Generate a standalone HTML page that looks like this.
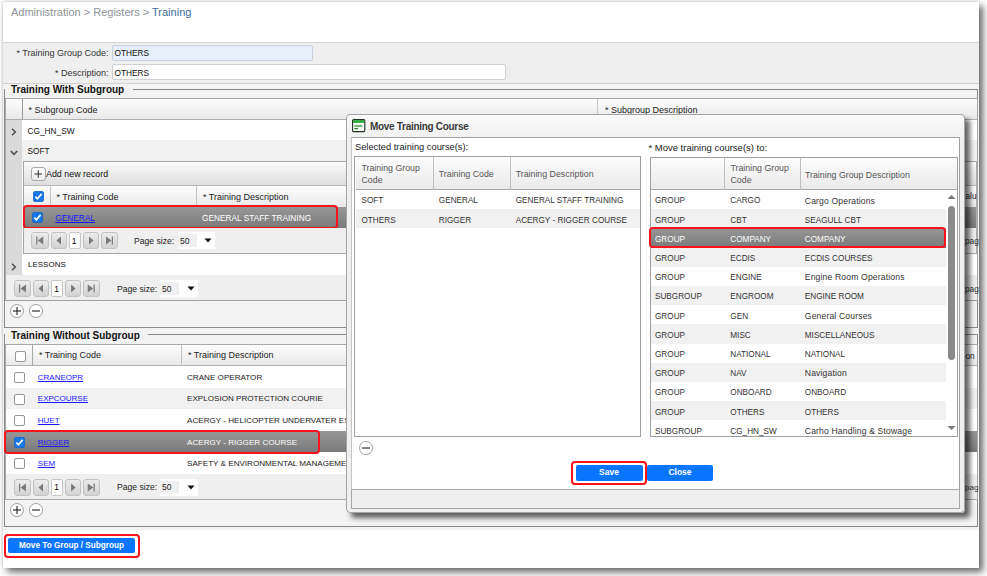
<!DOCTYPE html><html><head><meta charset="utf-8"><style>html,body{margin:0;padding:0;width:987px;height:576px;overflow:hidden;background:#fff;font-family:"Liberation Sans", sans-serif;}</style></head><body>
<div style="position:absolute;left:0px;top:0px;width:987px;height:576px;box-sizing:border-box;background:#fff;"></div>
<div style="position:absolute;left:3px;top:2px;width:976px;height:566px;box-sizing:border-box;background:#fff;box-shadow:4px 4px 7px rgba(0,0,0,0.6), -1px -1px 2px rgba(0,0,0,0.12);"></div>
<div style="position:absolute;top:6.69px;font-size:11px;line-height:11px;color:#8c939b;font-weight:400;white-space:nowrap;left:11px;">Administration &gt; Registers &gt; <span style="color:#3d6b9c">Training</span></div>
<div style="position:absolute;left:3px;top:42px;width:976px;height:1px;box-sizing:border-box;background:#d6d6d6;"></div>
<div style="position:absolute;left:3px;top:43px;width:976px;height:40px;box-sizing:border-box;background:#efefef;"></div>
<div style="position:absolute;left:3px;top:83px;width:976px;height:1px;box-sizing:border-box;background:#d0d0d0;"></div>
<div style="position:absolute;top:49.18px;font-size:9px;line-height:9px;color:#333;font-weight:400;white-space:nowrap;right:878.5px;">* Training Group Code:</div>
<div style="position:absolute;top:68.68px;font-size:9px;line-height:9px;color:#333;font-weight:400;white-space:nowrap;right:878.5px;">* Description:</div>
<div style="position:absolute;left:112px;top:45px;width:201px;height:16px;box-sizing:border-box;background:#e6eefa;border:1px solid #c9d1dc;border-radius:2px;"></div>
<div style="position:absolute;left:112px;top:64px;width:394px;height:16px;box-sizing:border-box;background:#fff;border:1px solid #d0d0d0;border-radius:2px;"></div>
<div style="position:absolute;top:49.47px;font-size:8.3px;line-height:8.3px;color:#111;font-weight:400;white-space:nowrap;left:114.5px;">OTHERS</div>
<div style="position:absolute;top:68.97px;font-size:8.3px;line-height:8.3px;color:#111;font-weight:400;white-space:nowrap;left:114.5px;">OTHERS</div>
<div style="position:absolute;left:3px;top:84px;width:976px;height:446px;box-sizing:border-box;background:#f3f3f3;"></div>
<div style="position:absolute;left:4px;top:89px;width:974px;height:239px;box-sizing:border-box;border:1px solid #8a8a8a;border-top:none;"></div>
<div style="position:absolute;left:133px;top:89px;width:845px;height:1px;box-sizing:border-box;background:#8a8a8a;"></div>
<div style="position:absolute;top:85.33px;font-size:10px;line-height:10px;color:#111;font-weight:700;white-space:nowrap;left:11px;">Training With Subgroup</div>
<div style="position:absolute;left:4px;top:334px;width:974px;height:193px;box-sizing:border-box;border:1px solid #8a8a8a;border-top:none;"></div>
<div style="position:absolute;left:148px;top:334px;width:830px;height:1px;box-sizing:border-box;background:#8a8a8a;"></div>
<div style="position:absolute;top:330.84px;font-size:10px;line-height:10px;color:#111;font-weight:700;white-space:nowrap;left:11px;">Training Without Subgroup</div>
<div style="position:absolute;left:5px;top:98px;width:973px;height:203px;box-sizing:border-box;border:1px solid #a8a8a8;background:#fff;"></div>
<div style="position:absolute;left:6px;top:99px;width:971px;height:20px;box-sizing:border-box;background:linear-gradient(#fdfdfd,#e9e9e9);"></div>
<div style="position:absolute;left:6px;top:118.5px;width:971px;height:1.0px;box-sizing:border-box;background:#b0b0b0;"></div>
<div style="position:absolute;left:22px;top:99px;width:1px;height:20px;box-sizing:border-box;background:#9c9c9c;"></div>
<div style="position:absolute;left:597px;top:99px;width:1px;height:20px;box-sizing:border-box;background:#c8c8c8;"></div>
<div style="position:absolute;top:105.88px;font-size:9px;line-height:9px;color:#222;font-weight:400;white-space:nowrap;left:28.5px;">* Subgroup Code</div>
<div style="position:absolute;top:105.88px;font-size:9px;line-height:9px;color:#222;font-weight:400;white-space:nowrap;left:605px;">* Subgroup Description</div>
<div style="position:absolute;left:6px;top:119.5px;width:16px;height:155.5px;box-sizing:border-box;background:#dadada;"></div>
<div style="position:absolute;left:22px;top:119.5px;width:955px;height:20.5px;box-sizing:border-box;background:#fff;"></div>
<div style="position:absolute;left:22px;top:140px;width:955px;height:21px;box-sizing:border-box;background:#f1f1f1;"></div>
<div style="position:absolute;top:127.47px;font-size:8.3px;line-height:8.3px;color:#111;font-weight:400;white-space:nowrap;left:27.5px;">CG_HN_SW</div>
<div style="position:absolute;top:147.17px;font-size:8.3px;line-height:8.3px;color:#111;font-weight:400;white-space:nowrap;left:27.5px;">SOFT</div>
<svg style="position:absolute;left:9px;top:126.5px" width="10" height="10"><path d="M3 1.8 L6.3 5 L3 8.2" fill="none" stroke="#505050" stroke-width="1.6"/></svg>
<svg style="position:absolute;left:9px;top:147.5px" width="10" height="10"><path d="M1.8 3 L5 6.3 L8.2 3" fill="none" stroke="#505050" stroke-width="1.6"/></svg>
<div style="position:absolute;left:22px;top:161px;width:955px;height:93px;box-sizing:border-box;background:#f4f4f4;"></div>
<div style="position:absolute;left:23px;top:161px;width:954px;height:93px;box-sizing:border-box;border:1px solid #a8a8a8;background:#fff;"></div>
<div style="position:absolute;left:24px;top:162px;width:952px;height:23px;box-sizing:border-box;background:linear-gradient(#fbfbfb,#dedede);"></div>
<div style="position:absolute;left:24px;top:184.5px;width:952px;height:1.0px;box-sizing:border-box;background:#b8b8b8;"></div>
<div style="position:absolute;left:31px;top:166.5px;width:14.5px;height:14.0px;box-sizing:border-box;background:linear-gradient(#fff,#ececec);border:1px solid #aaa;border-radius:3px;"></div>
<svg style="position:absolute;left:31px;top:166.5px" width="15" height="14"><rect x="3.5" y="6.45" width="7.5" height="1.05" fill="#333"/><rect x="6.75" y="3.2" width="1.05" height="7.5" fill="#333"/></svg>
<div style="position:absolute;top:170.47px;font-size:8.9px;line-height:8.9px;color:#111;font-weight:400;white-space:nowrap;left:46px;">Add new record</div>
<div style="position:absolute;left:24px;top:185.5px;width:952px;height:21.5px;box-sizing:border-box;background:linear-gradient(#fdfdfd,#e9e9e9);"></div>
<div style="position:absolute;left:50px;top:185.5px;width:1px;height:21.5px;box-sizing:border-box;background:#c4c4c4;"></div>
<div style="position:absolute;left:196px;top:185.5px;width:1px;height:21.5px;box-sizing:border-box;background:#c4c4c4;"></div>
<svg style="position:absolute;left:33px;top:191px" width="11" height="11"><rect x="0.5" y="0.5" width="10" height="10" rx="1.5" fill="#1877e6" stroke="#1467c8" stroke-width="0.8"/><path d="M2.4 5.6 L4.4 7.7 L8.6 2.9" fill="none" stroke="#fff" stroke-width="1.6"/></svg>
<div style="position:absolute;top:193.18px;font-size:9px;line-height:9px;color:#222;font-weight:400;white-space:nowrap;left:56.5px;">* Training Code</div>
<div style="position:absolute;top:193.18px;font-size:9px;line-height:9px;color:#222;font-weight:400;white-space:nowrap;left:203px;">* Training Description</div>
<div style="position:absolute;left:24px;top:207px;width:952px;height:21px;box-sizing:border-box;background:linear-gradient(#979797,#7a7a7a);"></div>
<svg style="position:absolute;left:32px;top:212px" width="11" height="11"><rect x="0.5" y="0.5" width="10" height="10" rx="1.5" fill="#1877e6" stroke="#1467c8" stroke-width="0.8"/><path d="M2.4 5.6 L4.4 7.7 L8.6 2.9" fill="none" stroke="#fff" stroke-width="1.6"/></svg>
<div style="position:absolute;top:214.27px;font-size:8.3px;line-height:8.3px;color:#1a1aff;font-weight:400;white-space:nowrap;left:55.3px;"><u>GENERAL</u></div>
<div style="position:absolute;top:214.27px;font-size:8.3px;line-height:8.3px;color:#fff;font-weight:400;white-space:nowrap;left:202px;">GENERAL STAFF TRAINING</div>
<div style="position:absolute;left:22.5px;top:204.5px;width:315.2px;height:24.19999999999999px;box-sizing:border-box;border:2px solid #f5141b;border-radius:4px;"></div>
<div style="position:absolute;left:24px;top:228px;width:952px;height:25px;box-sizing:border-box;background:#efefef;"></div>
<div style="position:absolute;left:31px;top:232px;width:17.5px;height:17px;box-sizing:border-box;background:linear-gradient(#ececec,#d2d2d2);border:1px solid #c2c2c2;border-radius:3px;"></div>
<div style="position:absolute;left:50.5px;top:232px;width:16.0px;height:17px;box-sizing:border-box;background:linear-gradient(#ececec,#d2d2d2);border:1px solid #c2c2c2;border-radius:3px;"></div>
<div style="position:absolute;left:68.5px;top:232px;width:12.0px;height:17px;box-sizing:border-box;background:#fff;border:1px solid #c8c8c8;border-radius:2px;"></div>
<div style="position:absolute;left:82.5px;top:232px;width:16.0px;height:17px;box-sizing:border-box;background:linear-gradient(#ececec,#d2d2d2);border:1px solid #c2c2c2;border-radius:3px;"></div>
<div style="position:absolute;left:100.5px;top:232px;width:17.0px;height:17px;box-sizing:border-box;background:linear-gradient(#ececec,#d2d2d2);border:1px solid #c2c2c2;border-radius:3px;"></div>
<svg style="position:absolute;left:31px;top:232px" width="17.5" height="17"><rect x="5.25" y="4.5" width="1.2" height="8" fill="#7a7a7a"/><path d="M12.25 4.5 L6.75 8.5 L12.25 12.5Z" fill="#7a7a7a"/></svg>
<svg style="position:absolute;left:50.5px;top:232px" width="16.0" height="17"><path d="M10.0 4.5 L5.5 8.5 L10.0 12.5Z" fill="#7a7a7a"/></svg>
<svg style="position:absolute;left:82.5px;top:232px" width="16.0" height="17"><path d="M6.0 4.5 L10.5 8.5 L6.0 12.5Z" fill="#7a7a7a"/></svg>
<svg style="position:absolute;left:100.5px;top:232px" width="17.0" height="17"><path d="M5.0 4.5 L10.5 8.5 L5.0 12.5Z" fill="#7a7a7a"/><rect x="10.8" y="4.5" width="1.2" height="8" fill="#7a7a7a"/></svg>
<div style="position:absolute;top:237.20px;font-size:8.5px;line-height:8.5px;color:#000;font-weight:400;white-space:nowrap;left:71.8px;">1</div>
<div style="position:absolute;top:237.12px;font-size:8.6px;line-height:8.6px;color:#222;font-weight:400;white-space:nowrap;left:134px;">Page size:</div>
<div style="position:absolute;left:178px;top:232px;width:37px;height:17px;box-sizing:border-box;background:#fff;"></div>
<div style="position:absolute;left:178px;top:234px;width:19px;height:13px;box-sizing:border-box;background:#f0f0f0;"></div>
<div style="position:absolute;top:237.20px;font-size:8.5px;line-height:8.5px;color:#222;font-weight:400;white-space:nowrap;left:180px;">50</div>
<svg style="position:absolute;left:204px;top:232px" width="8" height="17"><path d="M0.5 6.5 L7.5 6.5 L4 10.5Z" fill="#111"/></svg>
<div style="position:absolute;left:22px;top:254px;width:955px;height:21px;box-sizing:border-box;background:#fff;"></div>
<div style="position:absolute;top:261.23px;font-size:8px;line-height:8px;color:#111;font-weight:400;white-space:nowrap;left:28px;">LESSONS</div>
<svg style="position:absolute;left:9px;top:261.5px" width="10" height="10"><path d="M3 1.8 L6.3 5 L3 8.2" fill="none" stroke="#505050" stroke-width="1.6"/></svg>
<div style="position:absolute;left:6px;top:275px;width:971px;height:25px;box-sizing:border-box;background:#efefef;"></div>
<div style="position:absolute;left:13.5px;top:280px;width:17.0px;height:17px;box-sizing:border-box;background:linear-gradient(#ececec,#d2d2d2);border:1px solid #c2c2c2;border-radius:3px;"></div>
<div style="position:absolute;left:32.5px;top:280px;width:16.0px;height:17px;box-sizing:border-box;background:linear-gradient(#ececec,#d2d2d2);border:1px solid #c2c2c2;border-radius:3px;"></div>
<div style="position:absolute;left:51px;top:280px;width:11.5px;height:17px;box-sizing:border-box;background:#fff;border:1px solid #c8c8c8;border-radius:2px;"></div>
<div style="position:absolute;left:64.5px;top:280px;width:16.299999999999997px;height:17px;box-sizing:border-box;background:linear-gradient(#ececec,#d2d2d2);border:1px solid #c2c2c2;border-radius:3px;"></div>
<div style="position:absolute;left:83px;top:280px;width:16.5px;height:17px;box-sizing:border-box;background:linear-gradient(#ececec,#d2d2d2);border:1px solid #c2c2c2;border-radius:3px;"></div>
<svg style="position:absolute;left:13.5px;top:280px" width="17.0" height="17"><rect x="5.0" y="4.5" width="1.2" height="8" fill="#7a7a7a"/><path d="M12.0 4.5 L6.5 8.5 L12.0 12.5Z" fill="#7a7a7a"/></svg>
<svg style="position:absolute;left:32.5px;top:280px" width="16.0" height="17"><path d="M10.0 4.5 L5.5 8.5 L10.0 12.5Z" fill="#7a7a7a"/></svg>
<svg style="position:absolute;left:64.5px;top:280px" width="16.299999999999997" height="17"><path d="M6.149999999999999 4.5 L10.649999999999999 8.5 L6.149999999999999 12.5Z" fill="#7a7a7a"/></svg>
<svg style="position:absolute;left:83px;top:280px" width="16.5" height="17"><path d="M4.75 4.5 L10.25 8.5 L4.75 12.5Z" fill="#7a7a7a"/><rect x="10.55" y="4.5" width="1.2" height="8" fill="#7a7a7a"/></svg>
<div style="position:absolute;top:284.70px;font-size:8.5px;line-height:8.5px;color:#000;font-weight:400;white-space:nowrap;left:54.3px;">1</div>
<div style="position:absolute;top:284.62px;font-size:8.6px;line-height:8.6px;color:#222;font-weight:400;white-space:nowrap;left:117px;">Page size:</div>
<div style="position:absolute;left:160px;top:280px;width:38px;height:17px;box-sizing:border-box;background:#fff;"></div>
<div style="position:absolute;left:160px;top:282px;width:19px;height:13px;box-sizing:border-box;background:#f0f0f0;"></div>
<div style="position:absolute;top:284.70px;font-size:8.5px;line-height:8.5px;color:#222;font-weight:400;white-space:nowrap;left:162px;">50</div>
<svg style="position:absolute;left:187px;top:280px" width="8" height="17"><path d="M0.5 6.5 L7.5 6.5 L4 10.5Z" fill="#111"/></svg>
<div style="position:absolute;left:5px;top:300px;width:973px;height:1px;box-sizing:border-box;background:#a0a0a0;"></div>
<svg style="position:absolute;left:8px;top:302px" width="18" height="18"><circle cx="9" cy="9.6" r="6.5" fill="#ccc" opacity="0.5"/><circle cx="9" cy="9" r="6.5" fill="#fff" stroke="#9a9a9a" stroke-width="0.9"/><rect x="5" y="8.45" width="8" height="1.1" fill="#222"/><rect x="8.45" y="5" width="1.1" height="8" fill="#222"/></svg>
<svg style="position:absolute;left:27px;top:302px" width="18" height="18"><circle cx="9" cy="9.6" r="6.5" fill="#ccc" opacity="0.5"/><circle cx="9" cy="9" r="6.5" fill="#fff" stroke="#9a9a9a" stroke-width="0.9"/><rect x="5" y="8.45" width="8" height="1.1" fill="#222"/></svg>
<div style="position:absolute;left:5px;top:344px;width:973px;height:156px;box-sizing:border-box;border:1px solid #a8a8a8;background:#fff;"></div>
<div style="position:absolute;left:6px;top:345px;width:971px;height:20.5px;box-sizing:border-box;background:linear-gradient(#fdfdfd,#e9e9e9);"></div>
<div style="position:absolute;left:6px;top:365px;width:971px;height:1px;box-sizing:border-box;background:#b0b0b0;"></div>
<div style="position:absolute;left:32px;top:345px;width:1px;height:20.5px;box-sizing:border-box;background:#a8a8a8;"></div>
<div style="position:absolute;left:181px;top:345px;width:1px;height:20.5px;box-sizing:border-box;background:#c4c4c4;"></div>
<svg style="position:absolute;left:14.8px;top:351px" width="11" height="11"><rect x="0.5" y="0.5" width="10" height="10" rx="1.5" fill="#fff" stroke="#8a8a8a" stroke-width="0.9"/></svg>
<div style="position:absolute;top:351.18px;font-size:9px;line-height:9px;color:#222;font-weight:400;white-space:nowrap;left:39px;">* Training Code</div>
<div style="position:absolute;top:351.18px;font-size:9px;line-height:9px;color:#222;font-weight:400;white-space:nowrap;left:188px;">* Training Description</div>
<div style="position:absolute;left:6px;top:366px;width:971px;height:21.600000000000023px;box-sizing:border-box;background:#fff;"></div>
<svg style="position:absolute;left:13.8px;top:372px" width="11" height="11"><rect x="0.5" y="0.5" width="10" height="10" rx="1.5" fill="#fff" stroke="#8a8a8a" stroke-width="0.9"/></svg>
<div style="position:absolute;top:373.83px;font-size:8px;line-height:8px;color:#1a1aff;font-weight:400;white-space:nowrap;left:37.8px;"><u>CRANEOPR</u></div>
<div style="position:absolute;top:373.74px;font-size:8.1px;line-height:8.1px;color:#222;font-weight:400;white-space:nowrap;left:187px;">CRANE OPERATOR</div>
<div style="position:absolute;left:6px;top:387.6px;width:971px;height:21.600000000000023px;box-sizing:border-box;background:#f1f1f1;"></div>
<svg style="position:absolute;left:13.8px;top:393.6px" width="11" height="11"><rect x="0.5" y="0.5" width="10" height="10" rx="1.5" fill="#fff" stroke="#8a8a8a" stroke-width="0.9"/></svg>
<div style="position:absolute;top:395.43px;font-size:8px;line-height:8px;color:#1a1aff;font-weight:400;white-space:nowrap;left:37.8px;"><u>EXPCOURSE</u></div>
<div style="position:absolute;top:395.34px;font-size:8.1px;line-height:8.1px;color:#222;font-weight:400;white-space:nowrap;left:187px;">EXPLOSION PROTECTION COURIE</div>
<div style="position:absolute;left:6px;top:409.20000000000005px;width:971px;height:21.600000000000023px;box-sizing:border-box;background:#fff;"></div>
<svg style="position:absolute;left:13.8px;top:415.20000000000005px" width="11" height="11"><rect x="0.5" y="0.5" width="10" height="10" rx="1.5" fill="#fff" stroke="#8a8a8a" stroke-width="0.9"/></svg>
<div style="position:absolute;top:417.03px;font-size:8px;line-height:8px;color:#1a1aff;font-weight:400;white-space:nowrap;left:37.8px;"><u>HUET</u></div>
<div style="position:absolute;top:416.94px;font-size:8.1px;line-height:8.1px;color:#222;font-weight:400;white-space:nowrap;left:187px;">ACERGY - HELICOPTER UNDERVATER ES</div>
<div style="position:absolute;left:6px;top:430.80000000000007px;width:971px;height:21.600000000000023px;box-sizing:border-box;background:linear-gradient(#979797,#7a7a7a);"></div>
<svg style="position:absolute;left:13.8px;top:436.80000000000007px" width="11" height="11"><rect x="0.5" y="0.5" width="10" height="10" rx="1.5" fill="#1877e6" stroke="#1467c8" stroke-width="0.8"/><path d="M2.4 5.6 L4.4 7.7 L8.6 2.9" fill="none" stroke="#fff" stroke-width="1.6"/></svg>
<div style="position:absolute;top:438.63px;font-size:8px;line-height:8px;color:#1a1aff;font-weight:400;white-space:nowrap;left:37.8px;"><u>RIGGER</u></div>
<div style="position:absolute;top:438.54px;font-size:8.1px;line-height:8.1px;color:#fff;font-weight:400;white-space:nowrap;left:187px;">ACERGY - RIGGER COURSE</div>
<div style="position:absolute;left:6px;top:452.4000000000001px;width:971px;height:21.600000000000023px;box-sizing:border-box;background:#fff;"></div>
<svg style="position:absolute;left:13.8px;top:458.4000000000001px" width="11" height="11"><rect x="0.5" y="0.5" width="10" height="10" rx="1.5" fill="#fff" stroke="#8a8a8a" stroke-width="0.9"/></svg>
<div style="position:absolute;top:460.23px;font-size:8px;line-height:8px;color:#1a1aff;font-weight:400;white-space:nowrap;left:37.8px;"><u>SEM</u></div>
<div style="position:absolute;top:460.14px;font-size:8.1px;line-height:8.1px;color:#222;font-weight:400;white-space:nowrap;left:187px;">SAFETY &amp; ENVIRONMENTAL MANAGEMENT</div>
<div style="position:absolute;left:4px;top:429.5px;width:315.5px;height:24.5px;box-sizing:border-box;border:2px solid #f5141b;border-radius:4px;"></div>
<div style="position:absolute;left:6px;top:474px;width:971px;height:25px;box-sizing:border-box;background:#efefef;"></div>
<div style="position:absolute;left:13.5px;top:478.5px;width:17.0px;height:17.0px;box-sizing:border-box;background:linear-gradient(#ececec,#d2d2d2);border:1px solid #c2c2c2;border-radius:3px;"></div>
<div style="position:absolute;left:32.5px;top:478.5px;width:16.0px;height:17.0px;box-sizing:border-box;background:linear-gradient(#ececec,#d2d2d2);border:1px solid #c2c2c2;border-radius:3px;"></div>
<div style="position:absolute;left:51px;top:478.5px;width:11.5px;height:17.0px;box-sizing:border-box;background:#fff;border:1px solid #c8c8c8;border-radius:2px;"></div>
<div style="position:absolute;left:64.5px;top:478.5px;width:16.299999999999997px;height:17.0px;box-sizing:border-box;background:linear-gradient(#ececec,#d2d2d2);border:1px solid #c2c2c2;border-radius:3px;"></div>
<div style="position:absolute;left:83px;top:478.5px;width:16.5px;height:17.0px;box-sizing:border-box;background:linear-gradient(#ececec,#d2d2d2);border:1px solid #c2c2c2;border-radius:3px;"></div>
<svg style="position:absolute;left:13.5px;top:478.5px" width="17.0" height="17"><rect x="5.0" y="4.5" width="1.2" height="8" fill="#7a7a7a"/><path d="M12.0 4.5 L6.5 8.5 L12.0 12.5Z" fill="#7a7a7a"/></svg>
<svg style="position:absolute;left:32.5px;top:478.5px" width="16.0" height="17"><path d="M10.0 4.5 L5.5 8.5 L10.0 12.5Z" fill="#7a7a7a"/></svg>
<svg style="position:absolute;left:64.5px;top:478.5px" width="16.299999999999997" height="17"><path d="M6.149999999999999 4.5 L10.649999999999999 8.5 L6.149999999999999 12.5Z" fill="#7a7a7a"/></svg>
<svg style="position:absolute;left:83px;top:478.5px" width="16.5" height="17"><path d="M4.75 4.5 L10.25 8.5 L4.75 12.5Z" fill="#7a7a7a"/><rect x="10.55" y="4.5" width="1.2" height="8" fill="#7a7a7a"/></svg>
<div style="position:absolute;top:483.20px;font-size:8.5px;line-height:8.5px;color:#000;font-weight:400;white-space:nowrap;left:54.3px;">1</div>
<div style="position:absolute;top:483.12px;font-size:8.6px;line-height:8.6px;color:#222;font-weight:400;white-space:nowrap;left:117px;">Page size:</div>
<div style="position:absolute;left:160px;top:478.5px;width:38px;height:17.0px;box-sizing:border-box;background:#fff;"></div>
<div style="position:absolute;left:160px;top:480.5px;width:19px;height:13.0px;box-sizing:border-box;background:#f0f0f0;"></div>
<div style="position:absolute;top:483.20px;font-size:8.5px;line-height:8.5px;color:#222;font-weight:400;white-space:nowrap;left:162px;">50</div>
<svg style="position:absolute;left:187px;top:478.5px" width="8" height="17"><path d="M0.5 6.5 L7.5 6.5 L4 10.5Z" fill="#111"/></svg>
<svg style="position:absolute;left:8px;top:500.5px" width="18" height="18"><circle cx="9" cy="9.6" r="6.5" fill="#ccc" opacity="0.5"/><circle cx="9" cy="9" r="6.5" fill="#fff" stroke="#9a9a9a" stroke-width="0.9"/><rect x="5" y="8.45" width="8" height="1.1" fill="#222"/><rect x="8.45" y="5" width="1.1" height="8" fill="#222"/></svg>
<svg style="position:absolute;left:27px;top:500.5px" width="18" height="18"><circle cx="9" cy="9.6" r="6.5" fill="#ccc" opacity="0.5"/><circle cx="9" cy="9" r="6.5" fill="#fff" stroke="#9a9a9a" stroke-width="0.9"/><rect x="5" y="8.45" width="8" height="1.1" fill="#222"/></svg>
<div style="position:absolute;left:8px;top:538px;width:127px;height:15px;box-sizing:border-box;background:#0a75ff;border-radius:2px;"></div>
<div style="position:absolute;top:542.06px;font-size:8.2px;line-height:8.2px;color:#fff;font-weight:700;white-space:nowrap;left:71.5px;transform:translateX(-50%);">Move To Group / Subgroup</div>
<div style="position:absolute;left:4px;top:533.5px;width:136px;height:24.5px;box-sizing:border-box;border:2px solid #f5141b;border-radius:4px;"></div>
<div style="position:absolute;top:192.47px;font-size:8.3px;line-height:8.3px;color:#222;font-weight:400;white-space:nowrap;left:965.5px;">alu</div>
<div style="position:absolute;top:237.47px;font-size:8.3px;line-height:8.3px;color:#333;font-weight:400;white-space:nowrap;left:965px;">pag</div>
<div style="position:absolute;top:284.97px;font-size:8.3px;line-height:8.3px;color:#333;font-weight:400;white-space:nowrap;left:965px;">pag</div>
<div style="position:absolute;top:351.77px;font-size:8.3px;line-height:8.3px;color:#222;font-weight:400;white-space:nowrap;left:965.5px;">on</div>
<div style="position:absolute;top:483.73px;font-size:8px;line-height:8px;color:#333;font-weight:400;white-space:nowrap;left:965px;">pag</div>
<div style="position:absolute;left:346px;top:114px;width:618.5px;height:399px;box-sizing:border-box;background:linear-gradient(#fafafa,#f0f0f0 25px,#f0f0f0);border:1px solid #a4a4a4;border-radius:4px;box-shadow:5px 5px 5px rgba(0,0,0,0.6);"></div>
<svg style="position:absolute;left:352px;top:119px" width="14" height="14"><rect x="0.6" y="0.6" width="12.2" height="12" rx="1.2" fill="#fff" stroke="#1c2e1c" stroke-width="1.1"/><rect x="1.1" y="1.1" width="11.2" height="2.8" fill="#2fa83b"/><rect x="2.3" y="5.8" width="8" height="2.3" fill="#74bb74"/><rect x="2.3" y="9" width="3.8" height="1.3" rx="0.6" fill="#1f7a2b"/></svg>
<div style="position:absolute;top:121.84px;font-size:10px;line-height:10px;color:#3a3a3a;font-weight:700;white-space:nowrap;letter-spacing:-0.3px;left:370px;">Move Training Course</div>
<div style="position:absolute;left:350.5px;top:137px;width:609.5px;height:353px;box-sizing:border-box;background:#fff;border:1px solid #a0a0a0;border-left-color:#c4c4c4;border-bottom:none;"></div>
<div style="position:absolute;left:350.5px;top:489px;width:609.5px;height:19.5px;box-sizing:border-box;background:#efefef;border:1px solid #a8a8a8;"></div>
<div style="position:absolute;top:143.13px;font-size:9.3px;line-height:9.3px;color:#222;font-weight:400;white-space:nowrap;left:355px;">Selected training course(s):</div>
<div style="position:absolute;top:142.96px;font-size:9.5px;line-height:9.5px;color:#222;font-weight:400;white-space:nowrap;left:648.4px;">* Move training course(s) to:</div>
<div style="position:absolute;left:354px;top:156px;width:287px;height:281px;box-sizing:border-box;border:1px solid #a0a0a0;background:#fff;"></div>
<div style="position:absolute;left:355.5px;top:157px;width:284.5px;height:32.5px;box-sizing:border-box;background:linear-gradient(#fdfdfd,#e9e9e9);"></div>
<div style="position:absolute;left:355.5px;top:189px;width:284.5px;height:1px;box-sizing:border-box;background:#a8a8a8;"></div>
<div style="position:absolute;left:433px;top:157px;width:1px;height:32.5px;box-sizing:border-box;background:#c0c0c0;"></div>
<div style="position:absolute;left:510px;top:157px;width:1px;height:32.5px;box-sizing:border-box;background:#c0c0c0;"></div>
<div style="position:absolute;top:164.05px;font-size:8.8px;line-height:8.8px;color:#555;font-weight:400;white-space:nowrap;left:361.5px;">Training Group</div>
<div style="position:absolute;top:176.05px;font-size:8.8px;line-height:8.8px;color:#555;font-weight:400;white-space:nowrap;left:361.5px;">Code</div>
<div style="position:absolute;top:170.35px;font-size:8.8px;line-height:8.8px;color:#555;font-weight:400;white-space:nowrap;left:438.8px;">Training Code</div>
<div style="position:absolute;top:170.35px;font-size:8.8px;line-height:8.8px;color:#555;font-weight:400;white-space:nowrap;left:515.7px;">Training Description</div>
<div style="position:absolute;left:355.5px;top:209.3px;width:284.5px;height:19.19999999999999px;box-sizing:border-box;background:#f1f1f1;"></div>
<div style="position:absolute;top:197.26px;font-size:8.2px;line-height:8.2px;color:#333;font-weight:400;white-space:nowrap;left:361.5px;">SOFT</div>
<div style="position:absolute;top:197.26px;font-size:8.2px;line-height:8.2px;color:#333;font-weight:400;white-space:nowrap;left:438.8px;">GENERAL</div>
<div style="position:absolute;top:197.26px;font-size:8.2px;line-height:8.2px;color:#333;font-weight:400;white-space:nowrap;left:515.7px;">GENERAL STAFF TRAINING</div>
<div style="position:absolute;top:216.56px;font-size:8.2px;line-height:8.2px;color:#333;font-weight:400;white-space:nowrap;left:361.5px;">OTHERS</div>
<div style="position:absolute;top:216.56px;font-size:8.2px;line-height:8.2px;color:#333;font-weight:400;white-space:nowrap;left:438.8px;">RIGGER</div>
<div style="position:absolute;top:216.56px;font-size:8.2px;line-height:8.2px;color:#333;font-weight:400;white-space:nowrap;left:515.7px;">ACERGY - RIGGER COURSE</div>
<svg style="position:absolute;left:357px;top:438.5px" width="18" height="18"><circle cx="9" cy="9.6" r="6.5" fill="#ccc" opacity="0.5"/><circle cx="9" cy="9" r="6.5" fill="#fff" stroke="#9a9a9a" stroke-width="0.9"/><rect x="5" y="8.45" width="8" height="1.1" fill="#222"/></svg>
<div style="position:absolute;left:649.5px;top:156.5px;width:308.5px;height:280.5px;box-sizing:border-box;border:1px solid #a0a0a0;background:#fff;"></div>
<div style="position:absolute;left:651px;top:157.5px;width:306px;height:32.0px;box-sizing:border-box;background:linear-gradient(#fdfdfd,#e9e9e9);"></div>
<div style="position:absolute;left:651px;top:189px;width:306px;height:1px;box-sizing:border-box;background:#a8a8a8;"></div>
<div style="position:absolute;left:724px;top:157.5px;width:1px;height:32.0px;box-sizing:border-box;background:#c0c0c0;"></div>
<div style="position:absolute;left:799.5px;top:157.5px;width:1.0px;height:32.0px;box-sizing:border-box;background:#c0c0c0;"></div>
<div style="position:absolute;top:164.35px;font-size:8.8px;line-height:8.8px;color:#555;font-weight:400;white-space:nowrap;left:730.5px;">Training Group</div>
<div style="position:absolute;top:176.35px;font-size:8.8px;line-height:8.8px;color:#555;font-weight:400;white-space:nowrap;left:730.5px;">Code</div>
<div style="position:absolute;top:170.75px;font-size:8.8px;line-height:8.8px;color:#555;font-weight:400;white-space:nowrap;left:805px;">Training Group Description</div>
<div style="position:absolute;left:651px;top:190px;width:295px;height:19.19999999999999px;box-sizing:border-box;background:#fff;"></div>
<div style="position:absolute;top:197.36px;font-size:8.2px;line-height:8.2px;color:#333;font-weight:400;white-space:nowrap;left:655px;">GROUP</div>
<div style="position:absolute;top:197.36px;font-size:8.2px;line-height:8.2px;color:#333;font-weight:400;white-space:nowrap;left:730.3px;">CARGO</div>
<div style="position:absolute;top:196.52px;font-size:8.6px;line-height:8.6px;color:#333;font-weight:400;white-space:nowrap;letter-spacing:0.15px;left:804.8px;">Cargo Operations</div>
<div style="position:absolute;left:651px;top:209.2px;width:295px;height:19.19999999999999px;box-sizing:border-box;background:#f1f1f1;"></div>
<div style="position:absolute;top:216.56px;font-size:8.2px;line-height:8.2px;color:#333;font-weight:400;white-space:nowrap;left:655px;">GROUP</div>
<div style="position:absolute;top:216.56px;font-size:8.2px;line-height:8.2px;color:#333;font-weight:400;white-space:nowrap;left:730.3px;">CBT</div>
<div style="position:absolute;top:216.56px;font-size:8.2px;line-height:8.2px;color:#333;font-weight:400;white-space:nowrap;left:804.8px;">SEAGULL CBT</div>
<div style="position:absolute;left:651px;top:228.39999999999998px;width:295px;height:19.19999999999999px;box-sizing:border-box;background:linear-gradient(#979797,#7a7a7a);"></div>
<div style="position:absolute;top:235.76px;font-size:8.2px;line-height:8.2px;color:#fff;font-weight:400;white-space:nowrap;left:655px;">GROUP</div>
<div style="position:absolute;top:235.76px;font-size:8.2px;line-height:8.2px;color:#fff;font-weight:400;white-space:nowrap;left:730.3px;">COMPANY</div>
<div style="position:absolute;top:235.76px;font-size:8.2px;line-height:8.2px;color:#fff;font-weight:400;white-space:nowrap;left:804.8px;">COMPANY</div>
<div style="position:absolute;left:651px;top:247.59999999999997px;width:295px;height:19.19999999999999px;box-sizing:border-box;background:#f1f1f1;"></div>
<div style="position:absolute;top:254.96px;font-size:8.2px;line-height:8.2px;color:#333;font-weight:400;white-space:nowrap;left:655px;">GROUP</div>
<div style="position:absolute;top:254.96px;font-size:8.2px;line-height:8.2px;color:#333;font-weight:400;white-space:nowrap;left:730.3px;">ECDIS</div>
<div style="position:absolute;top:254.96px;font-size:8.2px;line-height:8.2px;color:#333;font-weight:400;white-space:nowrap;left:804.8px;">ECDIS COURSES</div>
<div style="position:absolute;left:651px;top:266.79999999999995px;width:295px;height:19.19999999999999px;box-sizing:border-box;background:#fff;"></div>
<div style="position:absolute;top:274.16px;font-size:8.2px;line-height:8.2px;color:#333;font-weight:400;white-space:nowrap;left:655px;">GROUP</div>
<div style="position:absolute;top:274.16px;font-size:8.2px;line-height:8.2px;color:#333;font-weight:400;white-space:nowrap;left:730.3px;">ENGINE</div>
<div style="position:absolute;top:273.32px;font-size:8.6px;line-height:8.6px;color:#333;font-weight:400;white-space:nowrap;letter-spacing:0.15px;left:804.8px;">Engine Room Operations</div>
<div style="position:absolute;left:651px;top:285.99999999999994px;width:295px;height:19.19999999999999px;box-sizing:border-box;background:#f1f1f1;"></div>
<div style="position:absolute;top:293.36px;font-size:8.2px;line-height:8.2px;color:#333;font-weight:400;white-space:nowrap;left:655px;">SUBGROUP</div>
<div style="position:absolute;top:293.36px;font-size:8.2px;line-height:8.2px;color:#333;font-weight:400;white-space:nowrap;left:730.3px;">ENGROOM</div>
<div style="position:absolute;top:293.36px;font-size:8.2px;line-height:8.2px;color:#333;font-weight:400;white-space:nowrap;left:804.8px;">ENGINE ROOM</div>
<div style="position:absolute;left:651px;top:305.19999999999993px;width:295px;height:19.19999999999999px;box-sizing:border-box;background:#fff;"></div>
<div style="position:absolute;top:312.56px;font-size:8.2px;line-height:8.2px;color:#333;font-weight:400;white-space:nowrap;left:655px;">GROUP</div>
<div style="position:absolute;top:312.56px;font-size:8.2px;line-height:8.2px;color:#333;font-weight:400;white-space:nowrap;left:730.3px;">GEN</div>
<div style="position:absolute;top:311.72px;font-size:8.6px;line-height:8.6px;color:#333;font-weight:400;white-space:nowrap;letter-spacing:0.15px;left:804.8px;">General Courses</div>
<div style="position:absolute;left:651px;top:324.3999999999999px;width:295px;height:19.19999999999999px;box-sizing:border-box;background:#f1f1f1;"></div>
<div style="position:absolute;top:331.76px;font-size:8.2px;line-height:8.2px;color:#333;font-weight:400;white-space:nowrap;left:655px;">GROUP</div>
<div style="position:absolute;top:331.76px;font-size:8.2px;line-height:8.2px;color:#333;font-weight:400;white-space:nowrap;left:730.3px;">MISC</div>
<div style="position:absolute;top:331.76px;font-size:8.2px;line-height:8.2px;color:#333;font-weight:400;white-space:nowrap;left:804.8px;">MISCELLANEOUS</div>
<div style="position:absolute;left:651px;top:343.5999999999999px;width:295px;height:19.19999999999999px;box-sizing:border-box;background:#fff;"></div>
<div style="position:absolute;top:350.96px;font-size:8.2px;line-height:8.2px;color:#333;font-weight:400;white-space:nowrap;left:655px;">GROUP</div>
<div style="position:absolute;top:350.96px;font-size:8.2px;line-height:8.2px;color:#333;font-weight:400;white-space:nowrap;left:730.3px;">NATIONAL</div>
<div style="position:absolute;top:350.96px;font-size:8.2px;line-height:8.2px;color:#333;font-weight:400;white-space:nowrap;left:804.8px;">NATIONAL</div>
<div style="position:absolute;left:651px;top:362.7999999999999px;width:295px;height:19.19999999999999px;box-sizing:border-box;background:#f1f1f1;"></div>
<div style="position:absolute;top:370.16px;font-size:8.2px;line-height:8.2px;color:#333;font-weight:400;white-space:nowrap;left:655px;">GROUP</div>
<div style="position:absolute;top:370.16px;font-size:8.2px;line-height:8.2px;color:#333;font-weight:400;white-space:nowrap;left:730.3px;">NAV</div>
<div style="position:absolute;top:369.32px;font-size:8.6px;line-height:8.6px;color:#333;font-weight:400;white-space:nowrap;letter-spacing:0.15px;left:804.8px;">Navigation</div>
<div style="position:absolute;left:651px;top:381.9999999999999px;width:295px;height:19.19999999999999px;box-sizing:border-box;background:#fff;"></div>
<div style="position:absolute;top:389.36px;font-size:8.2px;line-height:8.2px;color:#333;font-weight:400;white-space:nowrap;left:655px;">GROUP</div>
<div style="position:absolute;top:389.36px;font-size:8.2px;line-height:8.2px;color:#333;font-weight:400;white-space:nowrap;left:730.3px;">ONBOARD</div>
<div style="position:absolute;top:389.36px;font-size:8.2px;line-height:8.2px;color:#333;font-weight:400;white-space:nowrap;left:804.8px;">ONBOARD</div>
<div style="position:absolute;left:651px;top:401.1999999999999px;width:295px;height:19.19999999999999px;box-sizing:border-box;background:#f1f1f1;"></div>
<div style="position:absolute;top:408.56px;font-size:8.2px;line-height:8.2px;color:#333;font-weight:400;white-space:nowrap;left:655px;">GROUP</div>
<div style="position:absolute;top:408.56px;font-size:8.2px;line-height:8.2px;color:#333;font-weight:400;white-space:nowrap;left:730.3px;">OTHERS</div>
<div style="position:absolute;top:408.56px;font-size:8.2px;line-height:8.2px;color:#333;font-weight:400;white-space:nowrap;left:804.8px;">OTHERS</div>
<div style="position:absolute;left:651px;top:420.39999999999986px;width:295px;height:15.600000000000136px;box-sizing:border-box;background:#fff;"></div>
<div style="position:absolute;top:427.76px;font-size:8.2px;line-height:8.2px;color:#333;font-weight:400;white-space:nowrap;left:655px;">SUBGROUP</div>
<div style="position:absolute;top:427.76px;font-size:8.2px;line-height:8.2px;color:#333;font-weight:400;white-space:nowrap;left:730.3px;">CG_HN_SW</div>
<div style="position:absolute;top:426.92px;font-size:8.6px;line-height:8.6px;color:#333;font-weight:400;white-space:nowrap;letter-spacing:0.15px;left:804.8px;">Carho Handling &amp; Stowage</div>
<div style="position:absolute;left:648.5px;top:227.3px;width:297.0px;height:21.19999999999999px;box-sizing:border-box;border:2px solid #f5141b;border-radius:4px;"></div>
<div style="position:absolute;left:946px;top:190px;width:11px;height:246px;box-sizing:border-box;background:#fff;"></div>
<svg style="position:absolute;left:946px;top:193px" width="11" height="8"><path d="M1.5 6 L5.5 2 L9.5 6Z" fill="#777"/></svg>
<div style="position:absolute;left:947.5px;top:205.5px;width:7.5px;height:154.5px;box-sizing:border-box;background:#8a8a8a;border-radius:4px;"></div>
<svg style="position:absolute;left:946px;top:424px" width="11" height="8"><path d="M1.5 2 L5.5 6 L9.5 2Z" fill="#777"/></svg>
<div style="position:absolute;left:575.5px;top:465px;width:67.0px;height:16px;box-sizing:border-box;background:#0a75ff;border-radius:2px;"></div>
<div style="position:absolute;top:467.80px;font-size:8.5px;line-height:8.5px;color:#fff;font-weight:700;white-space:nowrap;left:609px;transform:translateX(-50%);">Save</div>
<div style="position:absolute;left:647px;top:465px;width:66px;height:16px;box-sizing:border-box;background:#0a75ff;border-radius:2px;"></div>
<div style="position:absolute;top:467.80px;font-size:8.5px;line-height:8.5px;color:#fff;font-weight:700;white-space:nowrap;left:680px;transform:translateX(-50%);">Close</div>
<div style="position:absolute;left:570.5px;top:461px;width:76.0px;height:24px;box-sizing:border-box;border:2px solid #f5141b;border-radius:4px;"></div>
</body></html>
